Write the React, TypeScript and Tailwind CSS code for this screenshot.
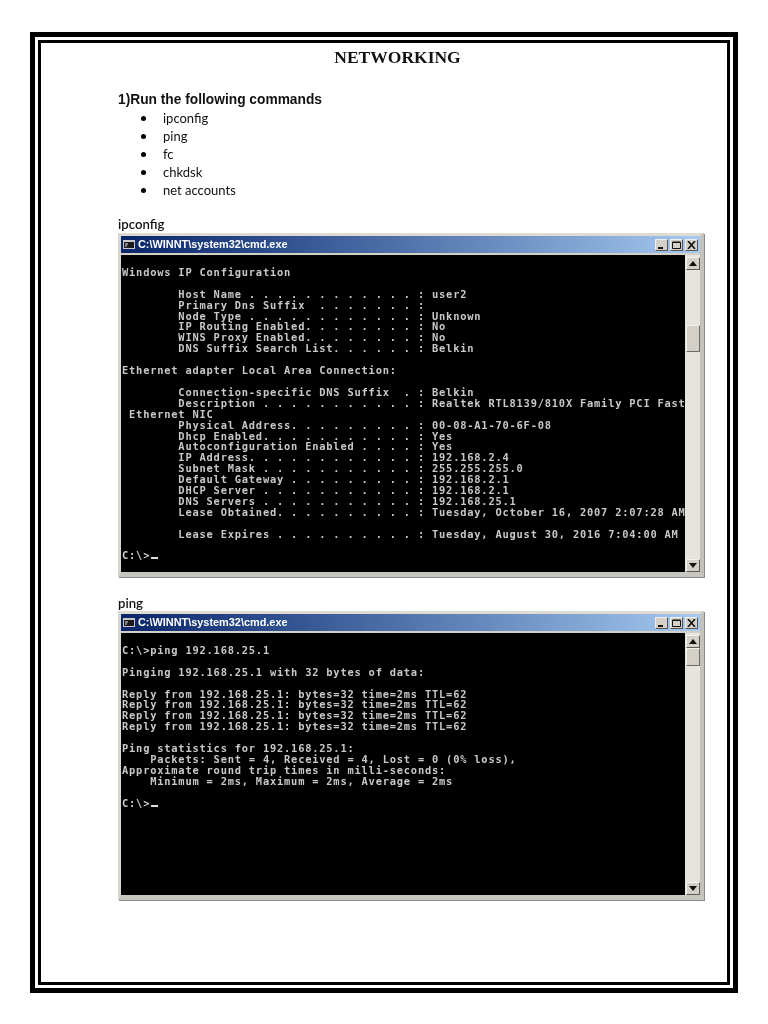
import React from "react";

const ipconfigLines = [
  "",
  "Windows IP Configuration",
  "",
  "        Host Name . . . . . . . . . . . . : user2",
  "        Primary Dns Suffix  . . . . . . . :",
  "        Node Type . . . . . . . . . . . . : Unknown",
  "        IP Routing Enabled. . . . . . . . : No",
  "        WINS Proxy Enabled. . . . . . . . : No",
  "        DNS Suffix Search List. . . . . . : Belkin",
  "",
  "Ethernet adapter Local Area Connection:",
  "",
  "        Connection-specific DNS Suffix  . : Belkin",
  "        Description . . . . . . . . . . . : Realtek RTL8139/810X Family PCI Fast",
  " Ethernet NIC",
  "        Physical Address. . . . . . . . . : 00-08-A1-70-6F-08",
  "        Dhcp Enabled. . . . . . . . . . . : Yes",
  "        Autoconfiguration Enabled . . . . : Yes",
  "        IP Address. . . . . . . . . . . . : 192.168.2.4",
  "        Subnet Mask . . . . . . . . . . . : 255.255.255.0",
  "        Default Gateway . . . . . . . . . : 192.168.2.1",
  "        DHCP Server . . . . . . . . . . . : 192.168.2.1",
  "        DNS Servers . . . . . . . . . . . : 192.168.25.1",
  "        Lease Obtained. . . . . . . . . . : Tuesday, October 16, 2007 2:07:28 AM",
  "",
  "        Lease Expires . . . . . . . . . . : Tuesday, August 30, 2016 7:04:00 AM",
  "",
];

const pingLines = [
  "",
  "C:\\>ping 192.168.25.1",
  "",
  "Pinging 192.168.25.1 with 32 bytes of data:",
  "",
  "Reply from 192.168.25.1: bytes=32 time=2ms TTL=62",
  "Reply from 192.168.25.1: bytes=32 time=2ms TTL=62",
  "Reply from 192.168.25.1: bytes=32 time=2ms TTL=62",
  "Reply from 192.168.25.1: bytes=32 time=2ms TTL=62",
  "",
  "Ping statistics for 192.168.25.1:",
  "    Packets: Sent = 4, Received = 4, Lost = 0 (0% loss),",
  "Approximate round trip times in milli-seconds:",
  "    Minimum = 2ms, Maximum = 2ms, Average = 2ms",
  "",
];

function ScrollArrow({ down }: { down?: boolean }) {
  return (
    <div className="flex h-[13px] w-full shrink-0 items-center justify-center border border-t-[#f4f2ec] border-l-[#f4f2ec] border-r-[#5a5a5a] border-b-[#5a5a5a] bg-[#d4d0c8]">
      <svg width="8" height="5" viewBox="0 0 8 5">
        <path d={down ? "M0 0H8L4 5Z" : "M4 0L8 5H0Z"} fill="#111" />
      </svg>
    </div>
  );
}

function CaptionButton({ children }: { children: React.ReactNode }) {
  return (
    <div className="flex h-[12px] w-[13px] items-center justify-center border border-t-[#eeeeee] border-l-[#eeeeee] border-r-[#555555] border-b-[#555555] bg-[#d4d0c8]">
      <svg width="9" height="8" viewBox="0 0 9 8">
        {children}
      </svg>
    </div>
  );
}

function CmdWindow({
  lines,
  windowClass,
  consoleClass,
  spacerClass,
  thumbClass,
}: {
  lines: string[];
  windowClass: string;
  consoleClass: string;
  spacerClass: string;
  thumbClass: string;
}) {
  return (
    <div className={`${windowClass} flex w-[586px] flex-col border-t-[3px] border-r-[4px] border-b-[5px] border-l-[3px] border-t-[#dedbd3] border-r-[#c4c2bc] border-b-[#c8c6c0] border-l-[#d8d5ce] bg-[#d4d0c8] shadow-[1px_1px_0_#8a8a8a]`}>
      <div className="flex h-[17px] shrink-0 items-center bg-gradient-to-r from-[#0a246a] to-[#a6caf0] px-[2px]">
        <svg width="12" height="9" viewBox="0 0 12 9" className="shrink-0">
          <rect width="12" height="9" fill="#c8c8c8" />
          <rect x="1" y="2" width="10" height="6" fill="#1a1a1a" />
          <path d="M2 4H5M2 6H4" stroke="#e8e8e8" strokeWidth="1" />
        </svg>
        <span className="ml-[3px] font-['Liberation_Sans',sans-serif] text-[10.9px] leading-none font-bold text-white blur-[0.3px]">C:\WINNT\system32\cmd.exe</span>
        <div className="ml-auto flex items-center">
          <CaptionButton>
            <rect x="1" y="6" width="5" height="2" fill="#111" />
          </CaptionButton>
          <div className="ml-[2px]">
            <CaptionButton>
              <path d="M0.5 1.5H8.5V7.5H0.5Z M0.5 1H8.5" fill="none" stroke="#111" />
            </CaptionButton>
          </div>
          <div className="ml-[2px]">
            <CaptionButton>
              <path d="M1 0L8 8M8 0L1 8" stroke="#111" strokeWidth="1.6" />
            </CaptionButton>
          </div>
        </div>
      </div>
      <div className={`${consoleClass} mt-[2px] flex overflow-hidden`}>
        <div className="w-[564px] shrink-0 overflow-hidden bg-black pt-[1px] pl-[1px] font-['DejaVu_Sans_Mono',monospace] text-[10.4px] leading-[10.92px] font-bold tracking-[0.79px] whitespace-pre text-[#c8c8c8] blur-[0.35px]">
          {lines.map((line, i) => (
            <div key={i} className="h-[10.92px]">
              {line}
            </div>
          ))}
          <div className="h-[10.92px]">
            C:\&gt;
            <span className="ml-[1px] inline-block h-[2px] w-[7px] bg-[#e0e0e0]" />
          </div>
        </div>
        <div className="flex w-[15px] shrink-0 flex-col bg-[#e6e4de] pt-[2px] pl-[1px]">
          <ScrollArrow />
          <div className={spacerClass} />
          <div className={`${thumbClass} border border-t-[#f4f2ec] border-l-[#f4f2ec] border-r-[#6a6a6a] border-b-[#6a6a6a] bg-[#d4d0c8]`} />
          <div className="flex-1" />
          <ScrollArrow down />
        </div>
      </div>
    </div>
  );
}

const commands = ["ipconfig", "ping", "fc", "chkdsk", "net accounts"];

export default function App() {
  return (
    <div className="min-h-[1024px] bg-white pt-[32px] pl-[30px]">
      <div className="h-[961px] w-[708px] border-[5px] border-black bg-white p-[3px]">
        <div className="h-full border-[3px] border-black pt-[4px] pl-[77px]">
          <h1 className="w-[559px] text-center font-['Liberation_Serif',serif] text-[17.5px] leading-[20px] font-bold text-[#111] blur-[0.2px]">NETWORKING</h1>
          <p className="mt-[25px] font-['Liberation_Sans',sans-serif] text-[13.75px] leading-[16px] font-bold text-[#111] blur-[0.25px]">1)Run the following commands</p>
          <ul className="mt-[1px] font-['Lato',sans-serif] text-[13px] leading-[18px] text-[#111] blur-[0.25px]">
            {commands.map((c) => (
              <li key={c} className="flex h-[18px] items-center">
                <span className="ml-[23px] h-[5px] w-[5px] rounded-full bg-black" />
                <span className="ml-[17px]">{c}</span>
              </li>
            ))}
          </ul>
          <p className="mt-[17px] font-['Lato',sans-serif] text-[13.2px] leading-[17px] font-semibold text-[#111] blur-[0.25px]">ipconfig</p>
          <CmdWindow lines={ipconfigLines} windowClass="h-[344px]" consoleClass="h-[317px]" spacerClass="h-[55px] shrink-0" thumbClass="h-[27px] shrink-0" />
          <p className="mt-[18px] font-['Lato',sans-serif] text-[13.2px] leading-[16px] font-semibold text-[#111] blur-[0.25px]">ping</p>
          <CmdWindow lines={pingLines} windowClass="h-[289px]" consoleClass="h-[262px]" spacerClass="h-0 shrink-0" thumbClass="h-[18px] shrink-0" />
        </div>
      </div>
    </div>
  );
}
